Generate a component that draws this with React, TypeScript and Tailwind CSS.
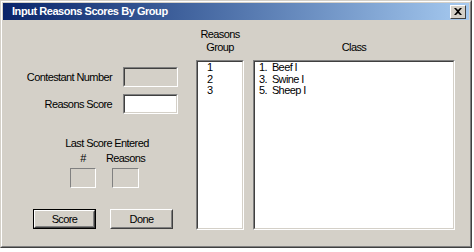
import React from 'react';

const font = { fontFamily: '"Liberation Sans", Arial, sans-serif' };

const groups = ['1', '2', '3'];
const classes = ['1.  Beef I', '3.  Swine I', '5.  Sheep I'];

const Sunken = ({ className = '' }: { className?: string }) => (
  <div className={`border border-t-[#808080] border-l-[#808080] border-b-white border-r-white ${className}`}>
    <div className="w-full h-full border border-t-[#404040] border-l-[#404040] border-b-[#d4d0c8] border-r-[#d4d0c8]" />
  </div>
);

const Button = ({ label, primary }: { label: string; primary?: boolean }) => (
  <div className={`w-[63px] h-[20px] ${primary ? 'border border-black' : ''}`}>
    <div className="w-full h-full border border-t-white border-l-white border-b-[#404040] border-r-[#404040] bg-[#d4d0c8]">
      <div className="w-full h-full border border-transparent border-b-[#808080] border-r-[#808080] flex items-center justify-center text-[11px] text-black">
        {label}
      </div>
    </div>
  </div>
);

export default function App() {
  return (
    <div className="w-[474px] h-[252px] bg-white" style={font}>
      <div className="w-[472px] h-[248px] border border-t-[#d4d0c8] border-l-[#d4d0c8] border-b-[#404040] border-r-[#404040]">
        <div className="w-full h-full border border-t-white border-l-white border-b-[#808080] border-r-[#808080] bg-[#d4d0c8] p-[1px] flex flex-col">
          {/* title bar */}
          <div className="h-[17px] flex items-center justify-between pl-[9px] pr-[3px] bg-gradient-to-r from-[#0a246a] to-[#a6caf0]">
            <span className="text-white font-bold text-[11px] leading-none tracking-[-0.45px]">Input Reasons Scores By Group</span>
            <div className="w-[16px] h-[14px] border border-t-white border-l-white border-b-[#404040] border-r-[#404040] bg-[#d4d0c8] flex items-center justify-center">
              <svg width="8" height="7" viewBox="0 0 8 7">
                <path d="M0 0h2l2 2 2-2h2L5 3.5 8 7H6L4 5 2 7H0l3-3.5z" fill="#000" />
              </svg>
            </div>
          </div>

          {/* body */}
          <div className="flex flex-1 text-[11px] text-black tracking-[-0.6px]">
            {/* left column */}
            <div className="w-[193px] flex flex-col pt-[47px]">
              <div className="flex items-center">
                <div className="w-[109px] text-right">Contestant Number</div>
                <Sunken className="ml-[11px] w-[55px] h-[20px] bg-[#d4d0c8]" />
              </div>
              <div className="flex items-center mt-[7px]">
                <div className="w-[109px] text-right">Reasons Score</div>
                <Sunken className="ml-[11px] w-[55px] h-[20px] bg-white" />
              </div>
              <div className="w-[208px] text-center mt-[23px] leading-[13px]">Last Score Entered</div>
              <div className="flex ml-[67px] gap-[16px] mt-[2px]">
                <div className="w-[26px] flex flex-col items-center">
                  <div className="leading-[13px]">#</div>
                  <div className="mt-[3px] w-[26px] h-[20px] border border-t-[#808080] border-l-[#808080] border-b-white border-r-white" />
                </div>
                <div className="w-[27px] flex flex-col items-center">
                  <div className="leading-[13px]">Reasons</div>
                  <div className="mt-[3px] w-[27px] h-[20px] border border-t-[#808080] border-l-[#808080] border-b-white border-r-white" />
                </div>
              </div>
              <div className="flex ml-[30px] gap-[14px] mt-[21px]">
                <Button label="Score" primary />
                <Button label="Done" />
              </div>
            </div>

            {/* lists */}
            <div className="flex gap-[9px] pt-[8px]">
              <div className="w-[48px] flex flex-col">
                <div className="h-[26px] text-center leading-[13px]">
                  Reasons
                  <br />
                  Group
                </div>
                <div className="mt-[6px] h-[170px] border border-t-[#808080] border-l-[#808080] border-b-white border-r-white">
                  <div className="w-full h-full border border-t-[#404040] border-l-[#404040] border-b-[#d4d0c8] border-r-[#d4d0c8] bg-white pl-[9px] leading-[11.5px]">
                    {groups.map((g) => (
                      <div key={g}>{g}</div>
                    ))}
                  </div>
                </div>
              </div>
              <div className="w-[202px] flex flex-col">
                <div className="h-[26px] flex items-end justify-center leading-[13px]">Class</div>
                <div className="mt-[6px] h-[170px] border border-t-[#808080] border-l-[#808080] border-b-white border-r-white">
                  <div className="w-full h-full border border-t-[#404040] border-l-[#404040] border-b-[#d4d0c8] border-r-[#d4d0c8] bg-white pl-[4px] leading-[11.5px] whitespace-pre">
                    {classes.map((c) => (
                      <div key={c}>{c}</div>
                    ))}
                  </div>
                </div>
              </div>
            </div>
          </div>
        </div>
      </div>
    </div>
  );
}
